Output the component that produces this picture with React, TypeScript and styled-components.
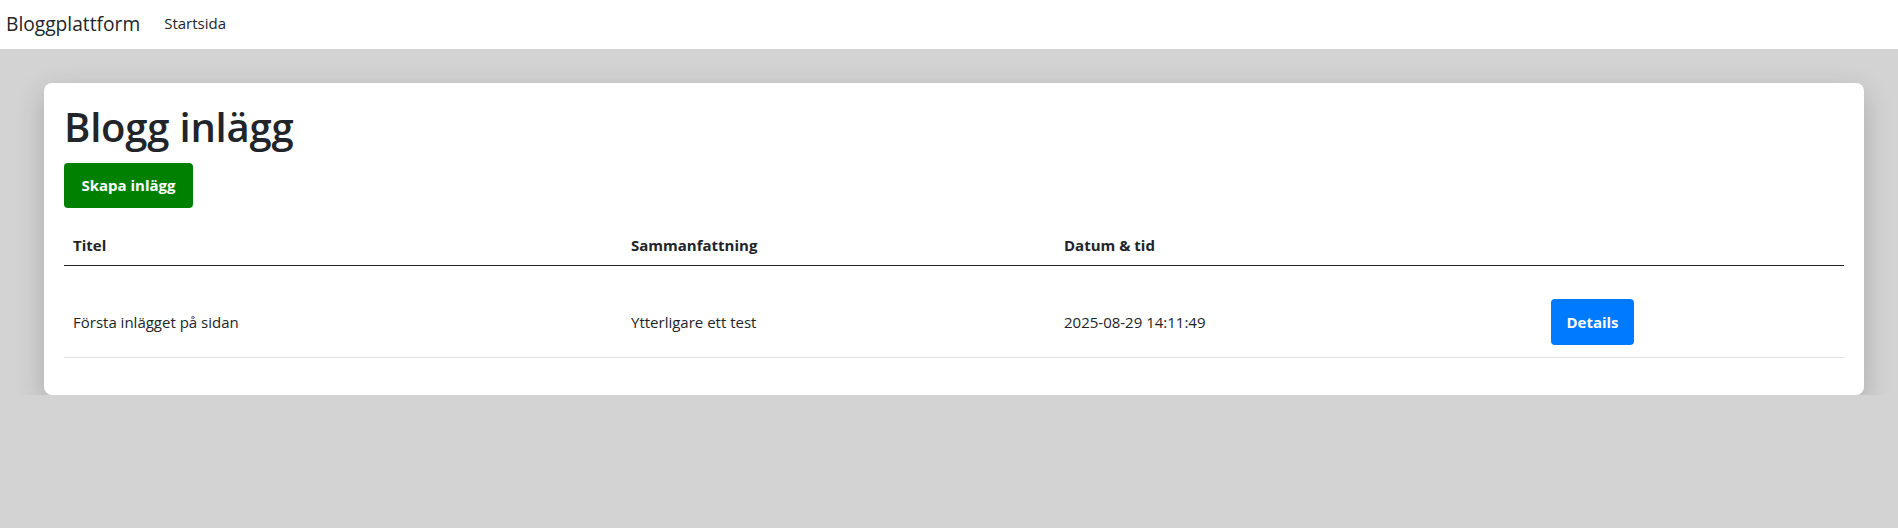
import React from "react";
import styled, { createGlobalStyle } from "styled-components";

const GlobalStyle = createGlobalStyle`
  * { box-sizing: border-box; }
  html, body {
    margin: 0;
    padding: 0;
    background: #d3d3d3;
    font-family: "Open Sans", "Noto Sans", sans-serif;
    color: #212529;
  }
`;

const Navbar = styled.nav`
  height: 49px;
  background: #ffffff;
  display: flex;
  align-items: center;
  padding: 0 0 4px 6px;
  gap: 24px;
`;

const Brand = styled.a`
  font-size: 19.2px;
  color: #212529;
  text-decoration: none;
  margin-top: 2px;
`;

const NavLink = styled.a`
  font-size: 15px;
  color: #212529;
  text-decoration: none;
`;

const Card = styled.main`
  margin: 34px 34px 0 44px;
  background: #ffffff;
  border-radius: 8px;
  padding: 20px;
  box-shadow: 0 10px 30px rgba(0, 0, 0, 0.2);
`;

const Heading = styled.h1`
  margin: 0 0 12px;
  font-size: 40px;
  font-weight: 600;
  line-height: 48px;
  letter-spacing: -0.2px;
`;

const Button = styled.button<{ $variant: "green" | "blue" }>`
  display: inline-block;
  border: none;
  border-radius: 4px;
  font-family: inherit;
  font-weight: 700;
  font-size: 15px;
  line-height: 21px;
  color: #ffffff;
  background: ${(p) => (p.$variant === "green" ? "#008000" : "#007bff")};
  cursor: pointer;
`;

const CreateButton = styled(Button)`
  height: 45px;
  width: 129px;
  padding: 0;
  margin-bottom: 17px;
`;

const DetailsButton = styled(Button)`
  height: 46px;
  width: 83px;
  padding: 0;
  margin: 25px 0 4px;
`;

const Table = styled.table`
  width: 100%;
  border-collapse: collapse;
  table-layout: fixed;
  margin-bottom: 17px;
`;

const HeadCell = styled.th<{ $w: number }>`
  width: ${(p) => p.$w}px;
  text-align: left;
  padding: 8px 8px 8px 9px;
  font-size: 15px;
  font-weight: 700;
  line-height: 24px;
  border-bottom: 1px solid #212529;
`;

const Cell = styled.td`
  padding: 8px 8px 8px 9px;
  font-size: 15px;
  line-height: 24px;
  vertical-align: baseline;
  border-bottom: 1px solid #dee2e6;
`;

const posts = [
  {
    title: "Första inlägget på sidan",
    summary: "Ytterligare ett test",
    date: "2025-08-29 14:11:49",
  },
];

export default function App() {
  return (
    <>
      <GlobalStyle />
      <Navbar>
        <Brand href="#">Bloggplattform</Brand>
        <NavLink href="#">Startsida</NavLink>
      </Navbar>
      <Card>
        <Heading>Blogg inlägg</Heading>
        <CreateButton $variant="green">Skapa inlägg</CreateButton>
        <Table>
          <thead>
            <tr>
              <HeadCell $w={558}>Titel</HeadCell>
              <HeadCell $w={433}>Sammanfattning</HeadCell>
              <HeadCell $w={487}>Datum &amp; tid</HeadCell>
              <HeadCell $w={302}></HeadCell>
            </tr>
          </thead>
          <tbody>
            {posts.map((p) => (
              <tr key={p.title}>
                <Cell>{p.title}</Cell>
                <Cell>{p.summary}</Cell>
                <Cell>{p.date}</Cell>
                <Cell>
                  <DetailsButton $variant="blue">Details</DetailsButton>
                </Cell>
              </tr>
            ))}
          </tbody>
        </Table>
      </Card>
    </>
  );
}
